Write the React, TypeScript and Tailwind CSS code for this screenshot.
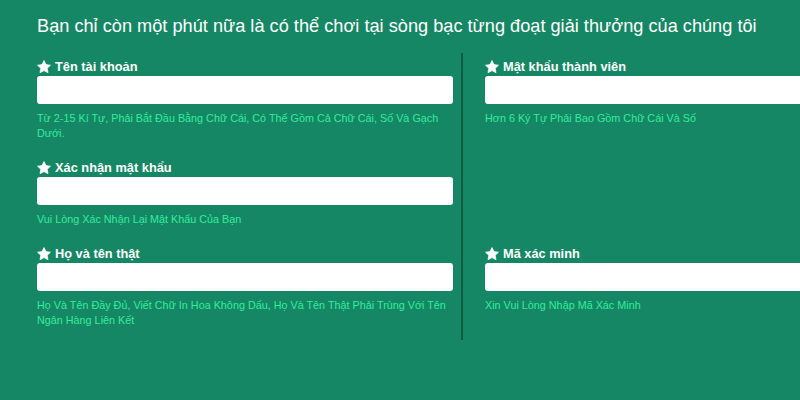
const Star = () => (
  <svg viewBox="0 0 24 24" className="h-[14px] w-[14px] shrink-0 fill-white">
    <path
      d="M12 .9l3.4 7 7.7 1-5.6 5.4 1.4 7.6L12 18.2l-6.9 3.7 1.4-7.6L.9 8.9l7.7-1z"
      strokeLinejoin="round"
      className="stroke-white"
      strokeWidth={1.2}
    />
  </svg>
);

function Field({ label, hint }: { label: string; hint: string }) {
  return (
    <div className="flex flex-col">
      <div className="flex h-[14px] items-center gap-[4px] text-[12.8px] font-bold leading-[14px] text-white">
        <Star />
        <span>{label}</span>
      </div>
      <input className="mt-[2px] h-[28px] w-[416px] rounded-[3px] bg-white px-2 outline-none" />
      <p className="mt-[7px] text-[10.8px] leading-[15px] text-[#33ec9e]">{hint}</p>
    </div>
  );
}

export default function App() {
  return (
    <div className="h-[400px] w-[800px] overflow-hidden bg-[#168764] pl-[37px] pt-[13px] font-['Liberation_Sans',Arial,sans-serif]">
      <h1 className="whitespace-nowrap text-[18.2px] leading-[26px] text-white">
        Bạn chỉ còn một phút nữa là có thể chơi tại sòng bạc từng đoạt giải thưởng của chúng tôi
      </h1>

      <div className="mt-[14px] grid grid-cols-[416px_8px_2px_22px_416px]">
        {/* left column */}
        <div className="col-start-1 row-start-1 pt-[7px]">
          <Field label="Tên tài khoản" hint="Từ 2-15 Kí Tự, Phải Bắt Đầu Bằng Chữ Cái, Có Thể Gồm Cả Chữ Cái, Số Và Gạch Dưới." />
        </div>
        <div className="col-start-1 row-start-2 pt-[20px]">
          <Field label="Xác nhận mật khẩu" hint="Vui Lòng Xác Nhận Lại Mật Khẩu Của Bạn" />
        </div>
        <div className="col-start-1 row-start-3 pb-[12px] pt-[20px]">
          <Field label="Họ và tên thật" hint="Họ Và Tên Đầy Đủ, Viết Chữ In Hoa Không Dấu, Họ Và Tên Thật Phải Trùng Với Tên Ngân Hàng Liên Kết" />
        </div>

        {/* divider */}
        <div className="col-start-3 row-span-3 row-start-1 bg-[#0e5c40]" />

        {/* right column */}
        <div className="col-start-5 row-start-1 pt-[7px]">
          <Field label="Mật khẩu thành viên" hint="Hơn 6 Ký Tự Phải Bao Gồm Chữ Cái Và Số" />
        </div>
        <div className="col-start-5 row-start-3 pb-[12px] pt-[20px]">
          <Field label="Mã xác minh" hint="Xin Vui Lòng Nhập Mã Xác Minh" />
        </div>
      </div>
    </div>
  );
}
